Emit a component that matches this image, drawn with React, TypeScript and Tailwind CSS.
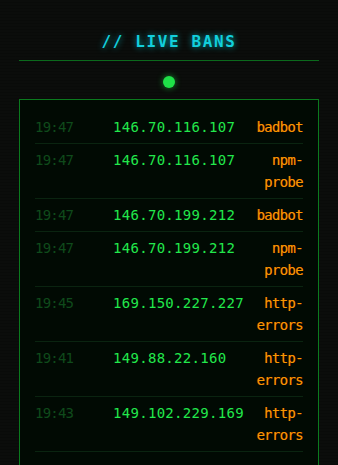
const bans = [
  { time: "19:47", ip: "146.70.116.107", reason: "badbot" },
  { time: "19:47", ip: "146.70.116.107", reason: "npm-probe" },
  { time: "19:47", ip: "146.70.199.212", reason: "badbot" },
  { time: "19:47", ip: "146.70.199.212", reason: "npm-probe" },
  { time: "19:45", ip: "169.150.227.227", reason: "http-errors" },
  { time: "19:41", ip: "149.88.22.160", reason: "http-errors" },
  { time: "19:43", ip: "149.102.229.169", reason: "http-errors" },
];

export default function App() {
  return (
    <div
      className="h-[465px] w-full overflow-hidden bg-[#0b0d0b] bg-[repeating-linear-gradient(0deg,rgba(0,0,0,0.18)_0px,rgba(0,0,0,0.18)_1px,transparent_1px,transparent_3px)] px-[19px]"
      style={{ fontFamily: '"DejaVu Sans Mono", "Liberation Mono", monospace' }}
    >
      {/* Header */}
      <div className="border-b border-[#0b6a1c] pb-[8px] pt-[32px]">
        <h2 className="text-center text-[16px] font-bold leading-[20px] tracking-[1.6px] text-[#12cfdc] [text-shadow:0_0_6px_rgba(0,220,235,0.7)]">
          // LIVE BANS
        </h2>
      </div>

      {/* Live indicator */}
      <div className="mb-[11px] mt-[15px] flex justify-center">
        <span className="h-3 w-3 rounded-full bg-[#1fe048] shadow-[0_0_6px_rgba(30,230,70,0.6)]" />
      </div>

      {/* Ban list */}
      <div className="border border-[#0b7a1e] bg-[#010a03] px-[15px] pb-[40px] pt-[11px]">
        {bans.map((b, i) => (
          <div
            key={i}
            className="grid grid-cols-[78px_1fr_56px] border-b border-[#0a2410] py-[5px] text-[14px] leading-[22px]"
          >
            <span className="tracking-[-0.8px] text-[#0f4a1b]">{b.time}</span>
            <span className="tracking-[0.3px] text-[#22e84c]">{b.ip}</span>
            <span className="text-right tracking-[-0.7px] text-[#f59a00] [text-shadow:-0.6px_0_0_rgba(255,40,0,0.6)]">
              {b.reason}
            </span>
          </div>
        ))}
      </div>
    </div>
  );
}
